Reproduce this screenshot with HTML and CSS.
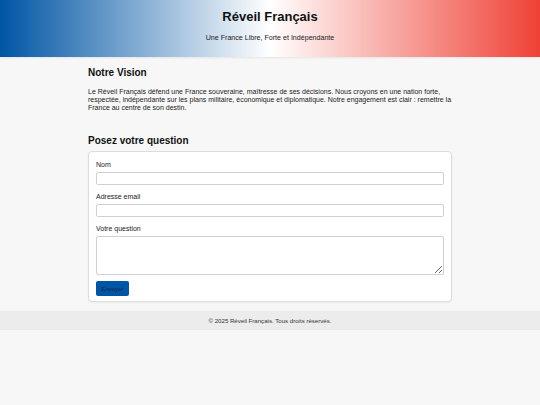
FILE: index.html
```html
<!DOCTYPE html>
<html lang="fr">
<head>
<meta charset="utf-8">
<title>Réveil Français</title>
<link rel="stylesheet" href="styles.css">
</head>
<body>
<header class="site-header">
  <h1 class="site-title">Réveil Français</h1>
  <p class="site-tagline">Une France Libre, Forte et Indépendante</p>
</header>
<main class="container">
  <section class="vision">
    <h2 class="section-title">Notre Vision</h2>
    <p class="vision-text">Le Réveil Français défend une France souveraine, maîtresse de ses décisions. Nous croyons en une nation forte, respectée, indépendante sur les plans militaire, économique et diplomatique. Notre engagement est clair : remettre la France au centre de son destin.</p>
  </section>
  <section class="ask">
    <h2 class="section-title">Posez votre question</h2>
    <form class="card">
      <label class="field-label" for="nom">Nom</label>
      <input class="field-input" id="nom" type="text">
      <label class="field-label" for="email">Adresse email</label>
      <input class="field-input" id="email" type="email">
      <label class="field-label" for="question">Votre question</label>
      <textarea class="field-area" id="question"></textarea>
      <button class="btn" type="button">Envoyer</button>
    </form>
  </section>
</main>
<footer class="site-footer">© 2025 Réveil Français. Tous droits réservés.</footer>
</body>
</html>
```
FILE: styles.css
```css
* { box-sizing: border-box; }
html, body { margin: 0; padding: 0; }
body {
  background: #f7f7f7;
  font-family: "Liberation Sans", Arial, sans-serif;
  font-size: 7px;
  color: #222;
}
.site-header {
  height: 57px;
  padding-top: 9px;
  text-align: center;
  background: linear-gradient(to right, #0055a4, #ffffff, #ef4135);
  box-shadow: 0 1px 2px rgba(0,0,0,0.08);
}
.site-title {
  margin: 0;
  font-size: 13px;
  line-height: 15px;
  font-weight: bold;
  color: #111;
}
.site-tagline {
  margin: 10px 0 0;
  font-size: 7.1px;
  line-height: 8px;
  color: #222;
}
.container {
  width: 364px;
  margin: 0 auto;
  padding-top: 10px;
}
.section-title {
  margin: 0;
  font-size: 10px;
  line-height: 12px;
  font-weight: bold;
  color: #111;
}
.vision-text {
  margin: 9px 0 0;
  line-height: 8px;
}
.ask { margin-top: 23px; }
.card {
  margin-top: 4px;
  display: flex;
  flex-direction: column;
  align-items: flex-start;
  background: #fff;
  border: 1px solid #dcdcdc;
  border-radius: 4px;
  box-shadow: 0 1px 2px rgba(0,0,0,0.05);
  padding: 9px 7px 5px;
}
.field-label {
  display: block;
  line-height: 8px;
  margin-bottom: 3px;
  color: #222;
}
.field-input, .field-area {
  display: block;
  width: 100%;
  border: 1px solid #d0d0d0;
  border-radius: 2px;
  background: #fff;
  margin: 0 0 8px;
  font: inherit;
}
.field-input { height: 13px; }
.field-area { height: 39px; margin-bottom: 6px; resize: vertical; }
.btn {
  height: 15px;
  width: 33px;
  padding: 0;
  border: none;
  border-radius: 2px;
  background: #0055a4;
  color: #15254a;
  font-family: "Liberation Sans", Arial, sans-serif;
  font-size: 6px;
}
.site-footer {
  margin-top: 9px;
  height: 19px;
  line-height: 19px;
  background: #ececec;
  text-align: center;
  font-size: 6.1px;
  color: #333;
}
```
